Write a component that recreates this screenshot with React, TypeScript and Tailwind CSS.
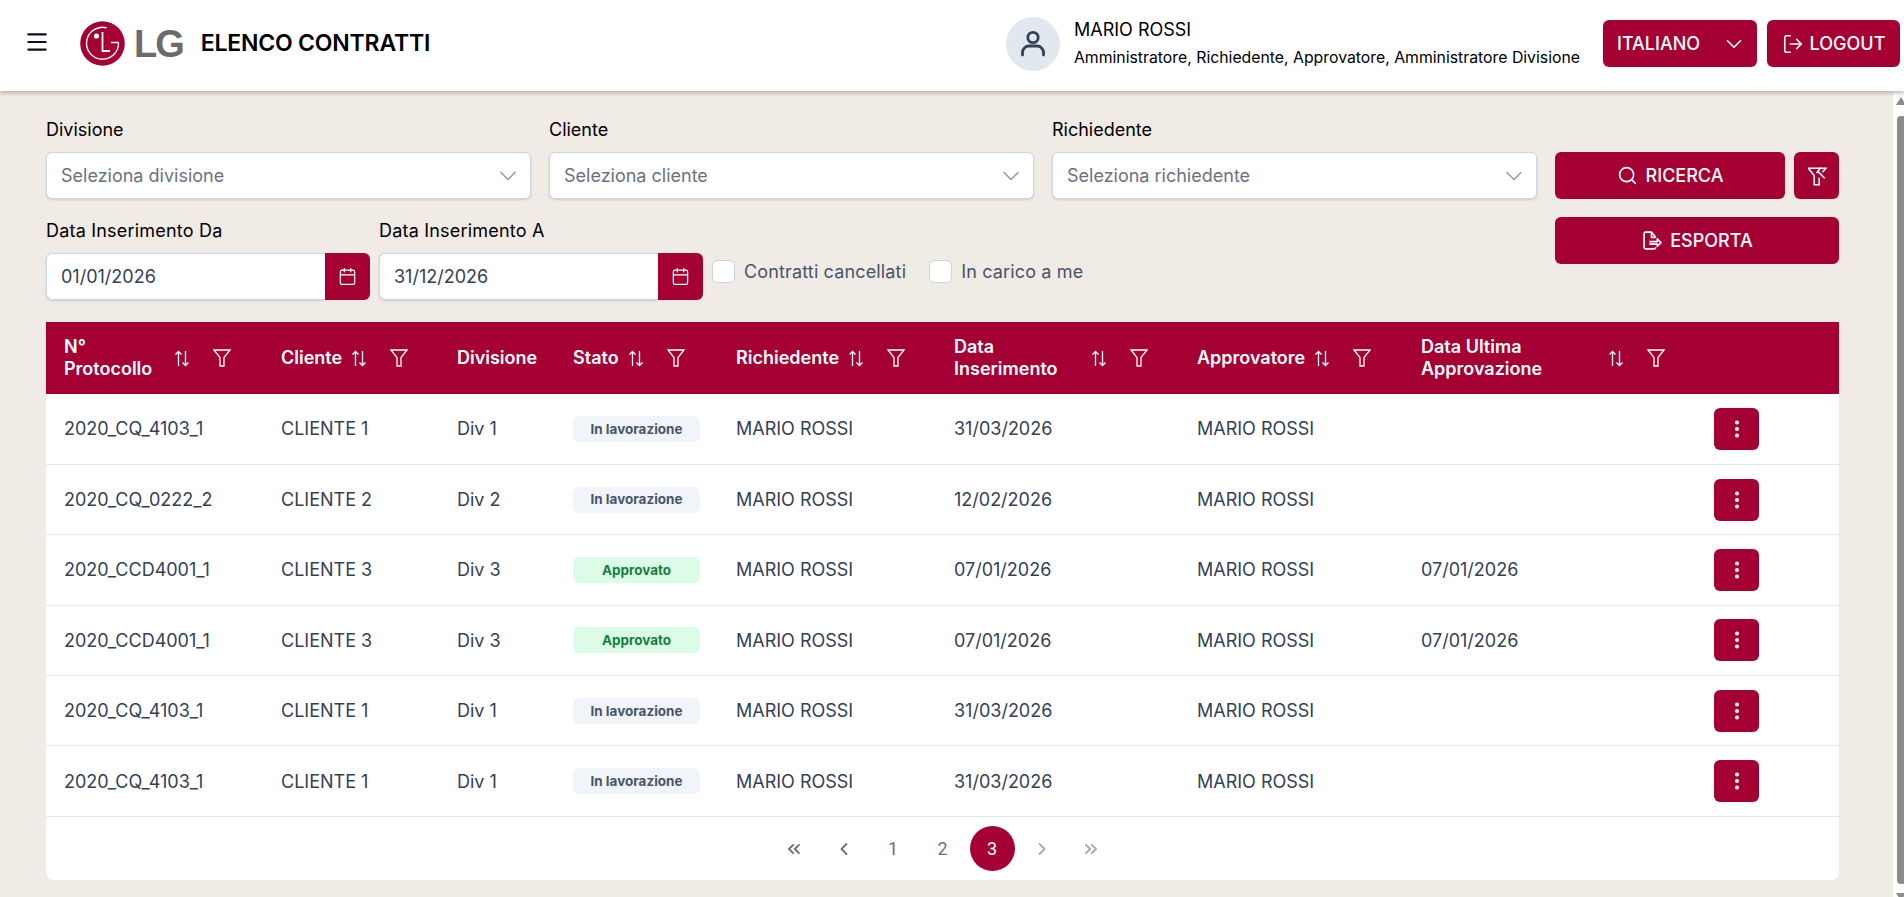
import { Calendar, ChevronDown, ChevronLeft, ChevronRight, ChevronsLeft, ChevronsRight, EllipsisVertical, LogOut, Menu, Search } from "lucide-react";

const FONT = "font-['Inter','Liberation_Sans',sans-serif]";

const columns = [
  { label: "N° Protocollo", width: "w-[217px]", text: "w-[101px]", sort: true, filter: true },
  { label: "Cliente", width: "w-[176px]", text: "", sort: true, filter: true },
  { label: "Divisione", width: "w-[116px]", text: "", sort: false, filter: false },
  { label: "Stato", width: "w-[163px]", text: "", sort: true, filter: true },
  { label: "Richiedente", width: "w-[218px]", text: "", sort: true, filter: true },
  { label: "Data Inserimento", width: "w-[243px]", text: "w-[128px]", sort: true, filter: true },
  { label: "Approvatore", width: "w-[224px]", text: "", sort: true, filter: true },
  { label: "Data Ultima Approvazione", width: "w-[293px]", text: "w-[178px]", sort: true, filter: true },
];

type Row = { protocollo: string; cliente: string; divisione: string; stato: string; inserimento: string; ultima?: string };

const rows: Row[] = [
  { protocollo: "2020_CQ_4103_1", cliente: "CLIENTE 1", divisione: "Div 1", stato: "In lavorazione", inserimento: "31/03/2026" },
  { protocollo: "2020_CQ_0222_2", cliente: "CLIENTE 2", divisione: "Div 2", stato: "In lavorazione", inserimento: "12/02/2026" },
  { protocollo: "2020_CCD4001_1", cliente: "CLIENTE 3", divisione: "Div 3", stato: "Approvato", inserimento: "07/01/2026", ultima: "07/01/2026" },
  { protocollo: "2020_CCD4001_1", cliente: "CLIENTE 3", divisione: "Div 3", stato: "Approvato", inserimento: "07/01/2026", ultima: "07/01/2026" },
  { protocollo: "2020_CQ_4103_1", cliente: "CLIENTE 1", divisione: "Div 1", stato: "In lavorazione", inserimento: "31/03/2026" },
  { protocollo: "2020_CQ_4103_1", cliente: "CLIENTE 1", divisione: "Div 1", stato: "In lavorazione", inserimento: "31/03/2026" },
];

function LgLogo() {
  return (
    <div className="flex items-center gap-[9px]">
      <svg width="45" height="45" viewBox="0 0 45 45">
        <circle cx="22.5" cy="22.5" r="22.3" fill="#a50034" />
        <circle cx="16.5" cy="15" r="2.6" fill="#fff" />
        <path d="M22.5 11v19h7.5" fill="none" stroke="#fff" strokeWidth="1.8" />
        <path d="M38.5 21.5h-7.5M38.5 21.5a16 16 0 1 1-12-14.7" fill="none" stroke="#fff" strokeWidth="1.4" />
      </svg>
      <span className="font-['Liberation_Sans',sans-serif] text-[38px] leading-none font-bold tracking-[-2px] text-[#6b6b6b]">LG</span>
    </div>
  );
}

function UserIcon() {
  return (
    <svg width="32" height="32" viewBox="0 0 32 32" fill="none" stroke="#334155" strokeWidth="2.8" strokeLinecap="round">
      <circle cx="16" cy="9.5" r="5.2" />
      <path d="M5.5 27v-2.5a6.5 6.5 0 0 1 6.5-6.5h8a6.5 6.5 0 0 1 6.5 6.5V27" />
    </svg>
  );
}

function Header() {
  return (
    <header className="relative z-10 flex h-[91px] shrink-0 items-center bg-white pr-[4px] pb-[4px] pl-[24px] shadow-[0_2px_4px_rgba(120,100,85,0.45)]">
      <Menu size={26} strokeWidth={2} className="mb-[4px] text-[#0b1220]" />
      <div className="ml-[30px]">
        <LgLogo />
      </div>
      <h1 className="ml-[18px] text-[23px] font-semibold tracking-[-0.2px] text-black">ELENCO CONTRATTI</h1>
      <div className="flex-1" />
      <div className="flex h-[54px] w-[54px] items-center justify-center rounded-full bg-[#e2e8f0]">
        <UserIcon />
      </div>
      <div className="ml-[14px] flex flex-col gap-[8px]">
        <div className="text-[18px] leading-[20px] text-black">MARIO ROSSI</div>
        <div className="text-[15.8px] leading-[20px] text-black">Amministratore, Richiedente, Approvatore, Amministratore Divisione</div>
      </div>
      <button className="ml-[23px] flex h-[47px] w-[154px] items-center justify-between rounded-[6px] bg-[#a50034] pr-[10px] pl-[14px] text-[18px] font-medium text-white">
        ITALIANO
        <ChevronDown size={26} strokeWidth={1.6} />
      </button>
      <button className="ml-[10px] flex h-[47px] w-[133px] items-center justify-center gap-[6px] rounded-[6px] bg-[#a50034] text-[18px] font-medium text-white">
        <LogOut size={22} strokeWidth={1.7} />
        LOGOUT
      </button>
    </header>
  );
}

function SelectField({ label, placeholder }: { label: string; placeholder: string }) {
  return (
    <div className="flex w-[485px] flex-col gap-[10px]">
      <label className="text-[18px] leading-[24px] text-black">{label}</label>
      <div className="flex h-[47px] items-center justify-between rounded-[6px] border border-[#cbd5e1] bg-white pr-[8px] pl-[14px] shadow-sm">
        <span className="text-[18px] text-[#6b7280]">{placeholder}</span>
        <ChevronDown size={28} strokeWidth={1.5} className="text-[#94a3b8]" />
      </div>
    </div>
  );
}

function DateField({ label, value }: { label: string; value: string }) {
  return (
    <div className="flex w-[324px] flex-col gap-[10px]">
      <label className="text-[18px] leading-[24px] tracking-[0.2px] text-black">{label}</label>
      <div className="flex h-[47px]">
        <div className="flex flex-1 items-center rounded-l-[6px] border border-r-0 border-[#cbd5e1] bg-white pl-[14px] text-[18px] text-[#334155] shadow-sm">{value}</div>
        <div className="flex w-[45px] items-center justify-center rounded-r-[6px] bg-[#a50034] text-white">
          <Calendar size={19} strokeWidth={1.6} />
        </div>
      </div>
    </div>
  );
}

function CheckField({ label }: { label: string }) {
  return (
    <div className="flex items-center gap-[9px]">
      <div className="h-[23px] w-[23px] rounded-[6px] border border-[#cbd5e1] bg-white" />
      <span className="pt-[1px] text-[18px] leading-[24px] tracking-[0.15px] text-[#475569]">{label}</span>
    </div>
  );
}

function RedButton({ className, children }: { className: string; children: React.ReactNode }) {
  return (
    <button className={`flex h-[47px] items-center justify-center gap-[8px] rounded-[6px] bg-[#a50034] text-[18px] font-medium text-white ${className}`}>
      {children}
    </button>
  );
}

function FilterClearIcon() {
  return (
    <svg width="22" height="22" viewBox="0 0 20 20" fill="none" stroke="#fff" strokeWidth="1.4">
      <path d="M2 3h11l-3.4 4.2M7.5 9.5 2 3M7.5 9.5V18h4.5v-6.5" />
      <path d="M13 3h5l-3 3.6M11 6l6 6" />
    </svg>
  );
}

function ExportIcon() {
  return (
    <svg width="21" height="21" viewBox="0 0 20 20" fill="none" stroke="#fff" strokeWidth="1.6" strokeLinejoin="round">
      <path d="M14 7 10 2H4.5A1.5 1.5 0 0 0 3 3.5v13A1.5 1.5 0 0 0 4.5 18H12.5a1.5 1.5 0 0 0 1.5-1.5" />
      <path d="M10 2v5h4M8 11h7.5V8.5L19 12l-3.5 3.5V13.5H8" />
    </svg>
  );
}

function Filters() {
  return (
    <section className="flex gap-[18px]">
      <div className="flex w-[1491px] flex-col gap-[20px] pt-[27px]">
        <div className="flex gap-[18px]">
          <SelectField label="Divisione" placeholder="Seleziona divisione" />
          <SelectField label="Cliente" placeholder="Seleziona cliente" />
          <SelectField label="Richiedente" placeholder="Seleziona richiedente" />
        </div>
        <div className="flex items-start gap-[9px]">
          <DateField label="Data Inserimento Da" value="01/01/2026" />
          <DateField label="Data Inserimento A" value="31/12/2026" />
          <div className="flex gap-[23px] pt-[40px]">
            <CheckField label="Contratti cancellati" />
            <CheckField label="In carico a me" />
          </div>
        </div>
      </div>
      <div className="flex w-[284px] flex-col gap-[18px] pt-[61px]">
        <div className="flex gap-[9px]">
          <RedButton className="w-[230px]">
            <Search size={21} strokeWidth={1.8} />
            RICERCA
          </RedButton>
          <RedButton className="w-[45px]">
            <FilterClearIcon />
          </RedButton>
        </div>
        <RedButton className="w-full">
          <ExportIcon />
          ESPORTA
        </RedButton>
      </div>
    </section>
  );
}

function SortIcon() {
  return (
    <svg width="16" height="17" viewBox="0 0 16 17" fill="none" stroke="#fff" strokeWidth="1.3" className="shrink-0">
      <path d="M4.5 16V1.5M1.5 4.5l3-3 3 3M11.5 1v14.5M8.5 12.5l3 3 3-3" />
    </svg>
  );
}

function FunnelIcon() {
  return (
    <svg width="18" height="18" viewBox="0 0 18 18" fill="none" stroke="#fff" strokeWidth="1.3" className="shrink-0">
      <path d="M1 1h16l-6 7.5V17H7V8.5z" />
    </svg>
  );
}

function StatusBadge({ stato }: { stato: string }) {
  const tone = stato === "Approvato" ? "bg-[#dcfce7] text-[#15803d]" : "bg-[#f1f5f9] text-[#475569]";
  return (
    <span className={`flex h-[26px] w-[127px] items-center justify-center rounded-[6px] text-[13.5px] font-bold ${tone}`}>{stato}</span>
  );
}

function ContractsTable() {
  return (
    <div className="mt-[22px]">
      <table className="w-[1793px] table-fixed border-collapse bg-white">
        <thead>
          <tr className="h-[72px] bg-[#a50034] text-white">
            {columns.map((c) => (
              <th key={c.label} className={`${c.width} pl-[18px] text-left text-[18px] leading-[22px] font-semibold`}>
                <div className="flex items-center">
                  <span className={c.text}>{c.label}</span>
                  {c.sort && <span className="ml-[9px]"><SortIcon /></span>}
                  {c.filter && <span className="ml-[23px]"><FunnelIcon /></span>}
                </div>
              </th>
            ))}
            <th />
          </tr>
        </thead>
        <tbody className="text-[18px] text-[#334155]">
          {rows.map((r, i) => (
            <tr key={i} className="h-[70.4px] border-b border-[#e2e8f0]">
              <td className="pl-[18px]">{r.protocollo}</td>
              <td className="pl-[18px]">{r.cliente}</td>
              <td className="pl-[18px]">{r.divisione}</td>
              <td className="pl-[18px]"><StatusBadge stato={r.stato} /></td>
              <td className="pl-[18px]">MARIO ROSSI</td>
              <td className="pl-[18px]">{r.inserimento}</td>
              <td className="pl-[18px]">MARIO ROSSI</td>
              <td className="pl-[18px]">{r.ultima}</td>
              <td>
                <button className="ml-[18px] flex h-[42px] w-[45px] items-center justify-center rounded-[6px] bg-[#a50034] text-white">
                  <EllipsisVertical size={22} strokeWidth={2.4} />
                </button>
              </td>
            </tr>
          ))}
        </tbody>
      </table>
      <Pager />
    </div>
  );
}

function Pager() {
  const base = "flex h-[45px] w-[45px] items-center justify-center rounded-full";
  return (
    <nav className="flex h-[63px] items-center justify-center gap-[4.5px] rounded-b-[8px] bg-white pt-[1px] font-['Roboto',sans-serif] text-[18px] text-[#6b7280]">
      <span className={base}><ChevronsLeft size={20} strokeWidth={2.3} /></span>
      <span className={base}><ChevronLeft size={20} strokeWidth={2.3} /></span>
      <span className={base}>1</span>
      <span className={base}>2</span>
      <span className={`${base} bg-[#a50034] text-white`}>3</span>
      <span className={`${base} text-[#aaaaaa]`}><ChevronRight size={20} strokeWidth={2.3} /></span>
      <span className={`${base} text-[#aaaaaa]`}><ChevronsRight size={20} strokeWidth={2.3} /></span>
    </nav>
  );
}

function Scrollbar() {
  return (
    <div className="flex h-[806px] w-[11px] shrink-0 flex-col overflow-hidden bg-[#fdfdfd] pt-[6px] pl-[3px]">
      <div className="h-0 w-0 shrink-0 border-x-[5px] border-b-[8px] border-x-transparent border-b-[#8b8b8b]" />
      <div className="mt-[11px] ml-[1px] h-[768px] w-[8px] shrink-0 rounded-l-[4px] bg-[#8b8b8b]" />
      <div className="mt-[9px] h-0 w-0 shrink-0 border-x-[5px] border-t-[8px] border-x-transparent border-t-[#8b8b8b]" />
    </div>
  );
}

export default function App() {
  return (
    <div className={`flex h-screen w-full flex-col overflow-hidden bg-[#f0ebe5] ${FONT}`}>
      <Header />
      <div className="flex min-h-0 flex-1">
        <main className="w-[1893px] shrink-0 pr-[54px] pl-[46px]">
          <Filters />
          <ContractsTable />
        </main>
        <Scrollbar />
      </div>
    </div>
  );
}
